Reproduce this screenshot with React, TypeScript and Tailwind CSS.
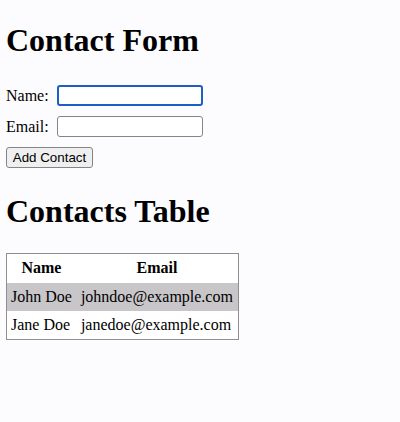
import { useState } from "react";

type Contact = { name: string; email: string };

export default function App() {
  const [contacts, setContacts] = useState<Contact[]>([
    { name: "John Doe", email: "johndoe@example.com" },
    { name: "Jane Doe", email: "janedoe@example.com" },
  ]);
  const [name, setName] = useState("");
  const [email, setEmail] = useState("");

  const addContact = (e: React.FormEvent) => {
    e.preventDefault();
    if (!name || !email) return;
    setContacts([...contacts, { name, email }]);
    setName("");
    setEmail("");
  };

  return (
    <div className="min-h-[422px] bg-[#fcfbfe] px-[6px] py-px font-['Liberation_Serif',serif] text-black">
      <h1 className="mt-[21px] mb-[26px] text-[32px] leading-[37px] font-bold">Contact Form</h1>
      <form onSubmit={addContact} className="flex flex-col">
        <div className="flex h-[21px] items-center">
          <label className="w-[51px] text-[16px]">Name:</label>
          <input
            value={name}
            onChange={(e) => setName(e.target.value)}
            className="h-[21px] w-[146px] rounded-[3px] border-2 border-[#1d5fc6] bg-white px-1 outline-none"
          />
        </div>
        <div className="mt-[10px] flex h-[21px] items-center">
          <label className="w-[51px] text-[16px]">Email:</label>
          <input
            value={email}
            onChange={(e) => setEmail(e.target.value)}
            className="h-[21px] w-[146px] rounded-[3px] border border-[#858585] bg-white px-1 outline-none"
          />
        </div>
        <div className="mt-[10px] flex">
          <button
            type="submit"
            className="h-[21px] w-[87px] rounded-[3px] border border-[#858585] bg-[#efefef] font-['Liberation_Sans',sans-serif] text-[13.33px] leading-[19px]"
          >
            Add Contact
          </button>
        </div>
      </form>
      <h1 className="mt-[25px] mb-[23px] text-[32px] leading-[37px] font-bold">Contacts Table</h1>
      <table className="border border-[#8f8f8f] bg-white text-[16px]">
        <thead>
          <tr className="h-[29px]">
            <th className="pl-[4px] pr-[5px] font-bold">Name</th>
            <th className="pl-[4px] pr-[5px] font-bold">Email</th>
          </tr>
        </thead>
        <tbody>
          {contacts.map((c, i) => (
            <tr key={c.email} className={i % 2 === 0 ? "h-[28px] bg-[#c8c6c9]" : "h-[29px]"}>
              <td className="pl-[4px] pr-[5px]">{c.name}</td>
              <td className="pl-[4px] pr-[5px]">{c.email}</td>
            </tr>
          ))}
        </tbody>
      </table>
    </div>
  );
}
